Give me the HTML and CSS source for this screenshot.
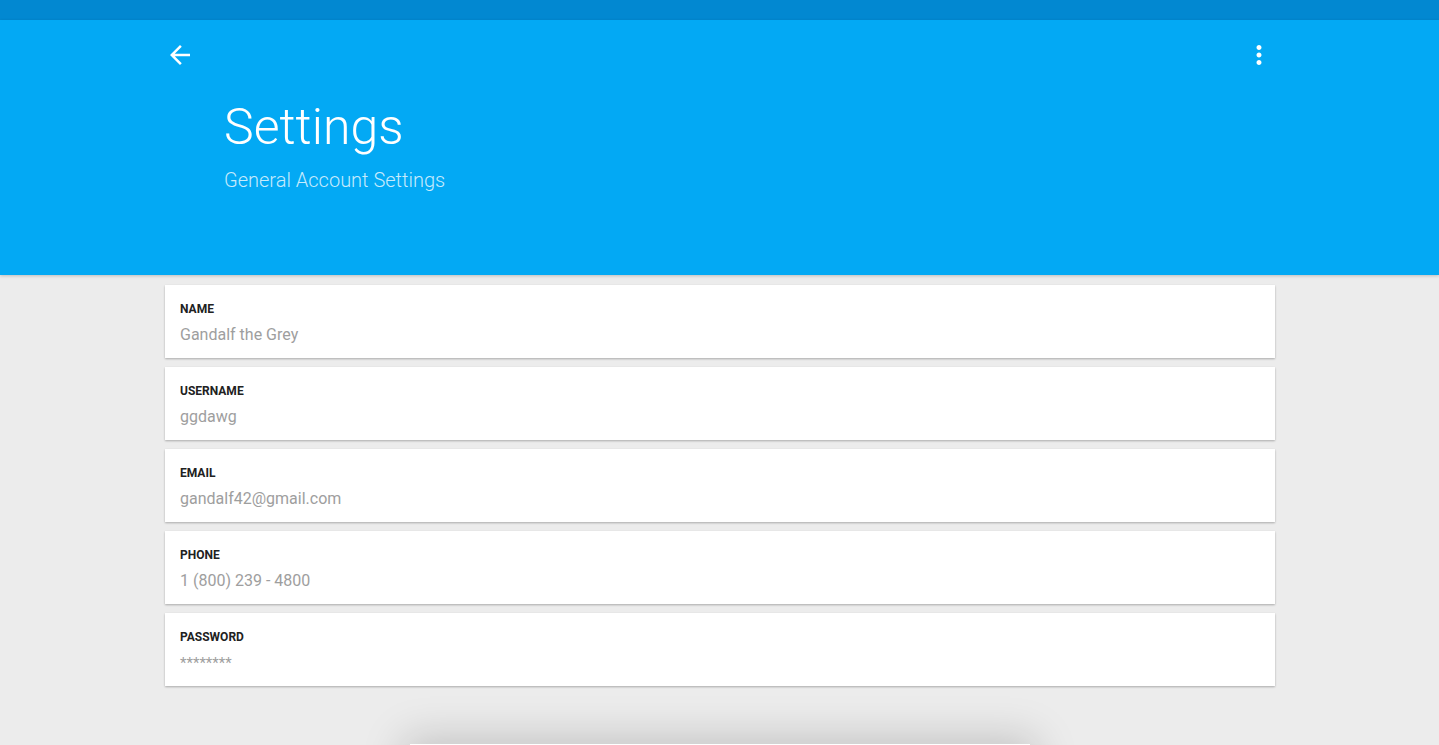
FILE: index.html
```html
<!DOCTYPE html>
<html>
<head>
<meta charset="utf-8">
<link rel="stylesheet" href="styles.css">
</head>
<body>
<div class="statusbar"></div>
<header class="header">
  <div class="toolbar">
    <svg class="icon" width="30" height="30" viewBox="0 0 24 24"><path fill="#fff" d="M20 11H7.83l5.59-5.59L12 4l-8 8 8 8 1.41-1.41L7.83 13H20v-2z"/></svg>
    <svg class="icon" width="30" height="30" viewBox="0 0 24 24"><path fill="#fff" d="M12 8c1.1 0 2-.9 2-2s-.9-2-2-2-2 .9-2 2 .9 2 2 2zm0 2c-1.1 0-2 .9-2 2s.9 2 2 2 2-.9 2-2-.9-2-2-2zm0 6c-1.1 0-2 .9-2 2s.9 2 2 2 2-.9 2-2-.9-2-2-2z"/></svg>
  </div>
  <div class="titles">
    <h1 class="title">Settings</h1>
    <p class="subtitle">General Account Settings</p>
  </div>
</header>
<main class="content">
  <div class="card"><div class="label">NAME</div><div class="value">Gandalf the Grey</div></div>
  <div class="card"><div class="label">USERNAME</div><div class="value">ggdawg</div></div>
  <div class="card"><div class="label">EMAIL</div><div class="value">gandalf42@gmail.com</div></div>
  <div class="card"><div class="label">PHONE</div><div class="value">1 (800) 239 - 4800</div></div>
  <div class="card"><div class="label">PASSWORD</div><div class="value pw">********</div></div>
  <div class="sheet"></div>
</main>
</body>
</html>
```
FILE: styles.css
```css
* { box-sizing: border-box; }
html, body { margin: 0; padding: 0; }
body {
  background: #ececec;
  font-family: Roboto, "Liberation Sans", sans-serif;
  overflow: hidden;
  height: 745px;
}
.statusbar { height: 20px; background: #0288d1; }
.header {
  height: 255px;
  background: #03a9f4;
  box-shadow: 0 1px 3px rgba(0,0,0,0.2);
  position: relative;
  z-index: 1;
  padding: 0 165px 0 165px;
}
.toolbar {
  display: flex;
  justify-content: space-between;
  padding-top: 20px;
}
.icon { display: block; }
.titles { padding-left: 59px; padding-top: 27px; }
.title {
  margin: 0;
  font-size: 50px;
  font-weight: 300;
  color: #fff;
  line-height: 60px;
}
.subtitle {
  margin: 0;
  margin-top: 11px;
  font-size: 20px;
  font-weight: 300;
  color: rgba(255,255,255,0.78);
}
.content {
  width: 1110px;
  margin: 10px 0 0 165px;
  display: flex;
  flex-direction: column;
  gap: 9px;
}
.card {
  background: #fff;
  height: 73px;
  padding: 17px 15px 0;
  box-shadow: 0 1px 2px rgba(0,0,0,0.28);
}
.label {
  font-size: 12px;
  font-weight: 700;
  color: #212121;
  line-height: 14px;
}
.value {
  margin-top: 9px;
  font-size: 16px;
  color: #9e9e9e;
  line-height: 20px;
}
.value.pw { margin-top: 9px; font-size: 15px; }
.sheet {
  margin: 49px auto 0;
  width: 620px;
  height: 200px;
  background: #fff;
  box-shadow: 0 0 40px 6px rgba(0,0,0,0.18);
}
```
